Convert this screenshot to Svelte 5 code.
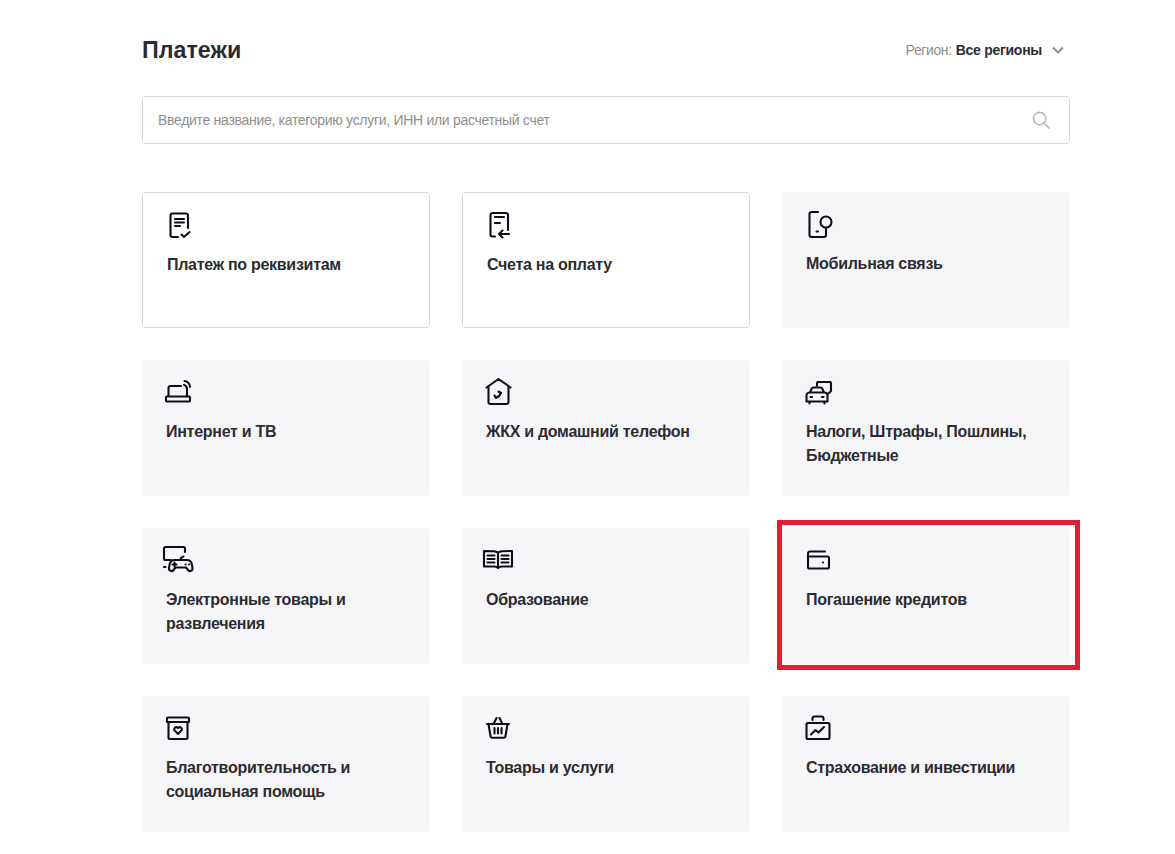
<script lang="ts">
	// d strings are drawn with a 2px stroke in a 32px box
	const cards = [
		{
			title: 'Платеж по реквизитам',
			outlined: true,
			icon: 'M21 19V6.500a2 2 0 0 0-2-2H5.500a2 2 0 0 0-2 2V26a2 2 0 0 0 2 2H11M8 10h9M8 13.500h9M8 17h5M14.500 25.500L17 28l5.500-5'
		},
		{
			title: 'Счета на оплату',
			outlined: true,
			icon: 'M21 21V6a2 2 0 0 0-2-2H5.500a2 2 0 0 0-2 2v19.500a2 2 0 0 0 2 2H8M8 8h9M8 14h5M22 25H12M15.500 21.500L12 25l3.500 3.500'
		},
		{
			title: 'Мобильная связь',
			icon: 'M12 4H5.500a2 2 0 0 0-2 2v21a2 2 0 0 0 2 2H18a2 2 0 0 0 2-2V20M10.500 23.500h1.500M25.500 14a5.500 5.500 0 1 1-11 0a5.500 5.500 0 0 1 11 0z'
		},
		{
			title: 'Интернет и ТВ',
			icon: 'M2.500 20v-8a2 2 0 0 1 2-2H15M21 12v8M1 20.500h22a1 1 0 0 1 1 1v3a1 1 0 0 1-1 1H1a1 1 0 0 1-1-1v-3a1 1 0 0 1 1-1zM18.500 5c3 .4 5.200 2.600 5.500 6M18 9c1.500 .2 2.500 1.200 2.700 2.800'
		},
		{
			title: 'ЖКХ и домашний телефон',
			icon: 'M.5 11.500L12.500 3l12 8.500M2.500 11v15a2 2 0 0 0 2 2h16a2 2 0 0 0 2-2V11M8.500 19.500l1.500 2.500c2.500-1 4-2.500 5-5l-2.500-1.500'
		},
		{
			title: 'Налоги, Штрафы, Пошлины, Бюджетные',
			icon: 'M11 9.500V7a1 1 0 0 1 1-1h12a1 1 0 0 1 1 1v8l-2.500 2.500M4 16.500l1.500-3.500a2.500 2.500 0 0 1 2.300-1.500h6.400a2.500 2.500 0 0 1 2.300 1.500l1.500 3.500M3.500 16.500h15a3 3 0 0 1 3 3v6h-21v-6a3 3 0 0 1 3-3zM3.500 25.500v2M18.500 25.500v2M4.500 21h1.500M16 21h1.500'
		},
		{
			title: 'Электронные товары и развлечения',
			icon: 'M5 16H-.5A1.500 1.500 0 0 1-2 14.500V4.500A1.500 1.500 0 0 1-.5 3H17.500A1.500 1.500 0 0 1 19 4.500V8M-2 23h1.500M8 16h13c3 0 4.500 2 5 5l.5 3c.3 3-3 4-4.500 2l-2-2.500H9.500l-2 2.500c-1.500 2-4.800 1-4.500-2l.5-3c.5-3 2-5 5-5zM14.500 16c0-2.500 1-3 3-3.500M6.500 20.500h4M8.500 18.500v4M19.500 20.500h.1M23 20.500h.1'
		},
		{
			title: 'Образование',
			icon: 'M12 8.500C10 7 8 7 -2 7v15.500h10c2 0 3 .5 4 1.500c1-1 2-1.500 4-1.500h10V7c-10 0-12 0-14 1.500zM12 8.500v15M1.500 11.500h7M1.500 15h7M1.500 18.500h7M15.500 11.500h7M15.500 15h7M15.500 18.500h7'
		},
		{
			title: 'Погашение кредитов',
			annotated: true,
			icon: 'M19 7.500H4a2 2 0 0 0-2 2V23a1.500 1.500 0 0 0 1.500 1.500H21.500A1.500 1.500 0 0 0 23 23V14a1.500 1.500 0 0 0-1.500-1.500H2M17 18.500h.1'
		},
		{
			title: 'Благотворительность и социальная помощь',
			icon: 'M2 5.500h20a1 1 0 0 1 1 1V10H1V6.500a1 1 0 0 1 1-1zM2.500 10v16a1 1 0 0 0 1 1H20.500a1 1 0 0 0 1-1V10M12 22l-3.300-3.500c-1.700-2 .9-4.500 3.300-2.500c2.400-2 5 .5 3.300 2.500z'
		},
		{
			title: 'Товары и услуги',
			icon: 'M1 12h22M2.500 12l2 12a2 2 0 0 0 2 1.800h11a2 2 0 0 0 2-1.800l2-12M7.500 12L10.500 6M16.500 12L13.500 6M8.500 16v5.500M12 16v5.500M15.500 16v5.500'
		},
		{
			title: 'Страхование и инвестиции',
			icon: 'M2 11h20a1.500 1.500 0 0 1 1.500 1.500V25.500A1.500 1.500 0 0 1 22 27H2a1.500 1.500 0 0 1-1.500-1.500V12.500A1.500 1.500 0 0 1 2 11zM6.500 8V6.500a2 2 0 0 1 2-2h7a2 2 0 0 1 2 2V8M5 22.500l4.500-4.500 3 2.500L18 15'
		}
	];
</script>

<main class="page">
	<header class="top">
		<h1>Платежи</h1>
		<div class="region">
			<span class="region-label">Регион:</span>
			<b>Все регионы</b>
			<svg class="chevron" width="12" height="8" viewBox="0 0 12 8" aria-hidden="true">
				<path d="M1 1.500l5 5 5-5" />
			</svg>
		</div>
	</header>

	<div class="search">
		<span class="placeholder">Введите название, категорию услуги, ИНН или расчетный счет</span>
		<svg class="loupe" width="19" height="19" viewBox="0 0 20 20" aria-hidden="true">
			<circle cx="8" cy="8" r="6.500" />
			<path d="M12.800 12.800L18.500 18.500" />
		</svg>
	</div>

	<section class="grid">
		{#each cards as card}
			<a class="card" class:outlined={card.outlined} href="#top">
				<svg class="icon" width="32" height="32" viewBox="0 0 32 32" aria-hidden="true">
					<path d={card.icon} />
				</svg>
				<span class="title">{card.title}</span>
				{#if card.annotated}
					<span class="marker"></span>
				{/if}
			</a>
		{/each}
	</section>
</main>

<style>
	:global(body) {
		background: #fff;
	}

	.page {
		width: 928px;
		padding: 30px 0 22px 142px;
		font-family: 'Liberation Sans', Arial, sans-serif;
		color: #2c2c30;
	}

	.top {
		display: flex;
		align-items: center;
		justify-content: space-between;
		height: 40px;
		margin-bottom: 26px;
	}

	h1 {
		margin: 0;
		font-size: 23.250px;
		line-height: 40px;
		font-weight: 700;
	}

	.region {
		display: flex;
		align-items: center;
		gap: 4px;
		padding-right: 6px;
		font-size: 14px;
		letter-spacing: -0.27px;
	}

	.region-label {
		color: #8d8d8d;
		letter-spacing: -0.4px;
	}

	.chevron {
		margin-left: 6px;
		fill: none;
		stroke: #8a8a8a;
		stroke-width: 1.800;
	}

	.search {
		display: flex;
		align-items: center;
		justify-content: space-between;
		box-sizing: border-box;
		height: 48px;
		padding: 0 18px 0 15px;
		border: 1px solid #d6d8d8;
		border-radius: 4px;
		background: #fff;
	}

	.placeholder {
		font-size: 14px;
		letter-spacing: -0.3px;
		color: #8f8f8f;
	}

	.loupe {
		fill: none;
		stroke: #bcbcbc;
		stroke-width: 1.800;
	}

	.grid {
		display: grid;
		grid-template-columns: repeat(3, 288px);
		grid-auto-rows: 136px;
		gap: 32px;
		margin-top: 48px;
	}

	.card {
		position: relative;
		display: flex;
		flex-direction: column;
		align-items: flex-start;
		gap: 12px;
		box-sizing: border-box;
		padding: 16px 24px;
		border-radius: 4px;
		background: #f6f6f9;
		color: inherit;
		text-decoration: none;
	}

	.card.outlined {
		border: 1px solid #d6d8d8;
		background: #fff;
	}

	.icon {
		flex-shrink: 0;
		overflow: visible;
		fill: none;
		stroke: #0e0e16;
		stroke-width: 2.100;
		stroke-linejoin: round;
		stroke-linecap: round;
	}

	.title {
		font-size: 16px;
		letter-spacing: -0.28px;
		line-height: 24px;
		font-weight: 700;
	}

	/* red annotation frame drawn over the card */
	.marker {
		position: absolute;
		top: -8px;
		left: -5px;
		right: -10px;
		bottom: -6px;
		border: 5px solid #e0202e;
		pointer-events: none;
	}
</style>
